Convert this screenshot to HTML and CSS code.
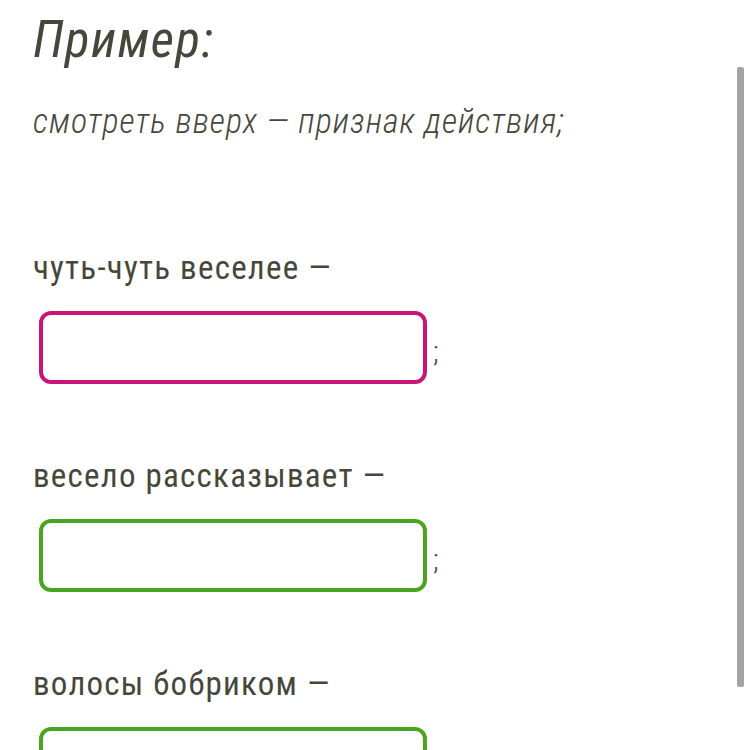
FILE: index.html
```html
<!DOCTYPE html>
<html lang="ru">
<head>
<meta charset="utf-8">
<link rel="stylesheet" href="styles.css">
</head>
<body>
<main class="page">
  <h1 class="title">Пример:</h1>
  <p class="example">смотреть вверх — признак действия;</p>
  <div class="items">
    <div class="item">
      <div class="label">чуть-чуть веселее —</div>
      <div class="answer">
        <input class="field field-wrong" type="text">
        <span class="semi">;</span>
      </div>
    </div>
    <div class="item">
      <div class="label">весело рассказывает —</div>
      <div class="answer">
        <input class="field field-ok" type="text">
        <span class="semi">;</span>
      </div>
    </div>
    <div class="item">
      <div class="label">волосы бобриком —</div>
      <div class="answer">
        <input class="field field-ok" type="text">
        <span class="semi">;</span>
      </div>
    </div>
  </div>
</main>
<div class="scrollbar"></div>
</body>
</html>
```
FILE: styles.css
```css
html, body {
  margin: 0;
  padding: 0;
  background: #ffffff;
  overflow: hidden;
  height: 750px;
}
body {
  font-family: "Roboto Condensed", Roboto, "Noto Sans", sans-serif;
  font-stretch: condensed;
  color: #46473b;
}
.page {
  padding: 10px 0 0 33px;
}
.title {
  margin: 0;
  font-size: 51px;
  line-height: 60px;
  font-style: italic;
  font-weight: 400;
  letter-spacing: 1.4px;
}
.example {
  margin: 31px 0 0 0;
  font-size: 34px;
  line-height: 40px;
  font-style: italic;
  font-weight: 300;
  letter-spacing: 1px;
}
.items {
  margin-top: 107px;
  display: flex;
  flex-direction: column;
  gap: 72px;
}
.item {
  display: flex;
  flex-direction: column;
  gap: 23px;
}
.label {
  font-size: 33px;
  line-height: 40px;
  font-weight: 400;
  letter-spacing: 1.25px;
}
.answer {
  display: flex;
  align-items: center;
  gap: 6px;
  padding-left: 6px;
}
.field {
  box-sizing: border-box;
  width: 388px;
  height: 73px;
  border-radius: 12px;
  border: 4px solid #c8157a;
  background: #fff;
  outline: none;
  margin: 0;
  padding: 0 12px;
  font: inherit;
  font-size: 30px;
}
.field-wrong { border-color: #c8157a; }
.field-ok { border-color: #49a51e; }
.semi {
  font-size: 30px;
  line-height: 30px;
  font-weight: 300;
  padding-top: 8px;
}
.scrollbar {
  position: fixed;
  left: 737px;
  top: 67px;
  width: 7px;
  height: 620px;
  background: #a3a3a3;
  border-radius: 2px;
}
```
